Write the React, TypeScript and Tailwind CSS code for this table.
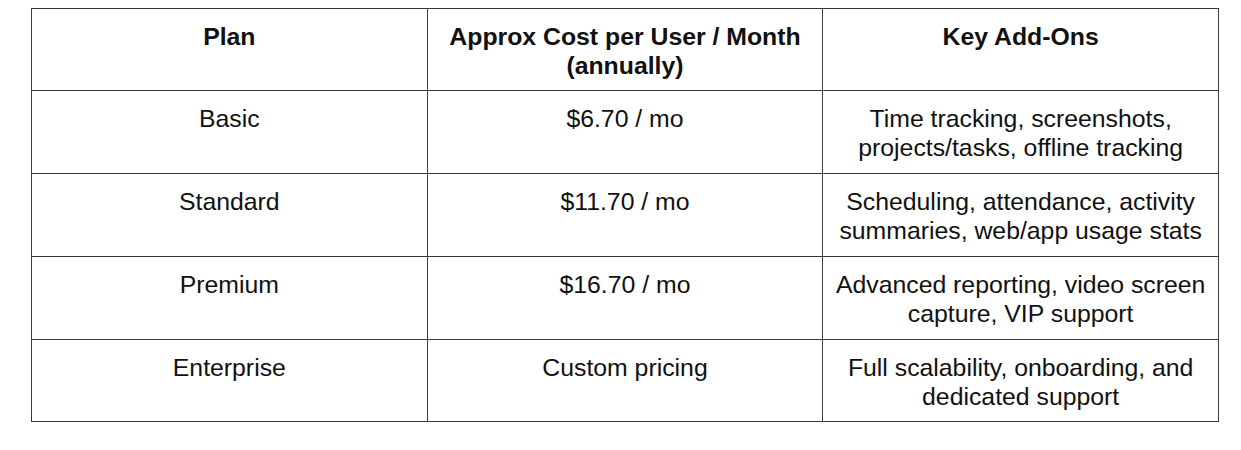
const rows = [
  {
    plan: "Basic",
    cost: "$6.70 / mo",
    addons: ["Time tracking, screenshots,", "projects/tasks, offline tracking"],
  },
  {
    plan: "Standard",
    cost: "$11.70 / mo",
    addons: ["Scheduling, attendance, activity", "summaries, web/app usage stats"],
  },
  {
    plan: "Premium",
    cost: "$16.70 / mo",
    addons: ["Advanced reporting, video screen", "capture, VIP support"],
  },
  {
    plan: "Enterprise",
    cost: "Custom pricing",
    addons: ["Full scalability, onboarding, and", "dedicated support"],
  },
];

const cell =
  "border border-[#3a3a3a] px-2 pt-[13px] align-top text-center";

export default function App() {
  return (
    <div className="min-h-[450px] bg-white pl-[31px] pt-[8px] font-['Liberation_Sans',Arial,sans-serif] text-[24.8px] leading-[29px] text-[#111]">
      <table className="w-[1188px] table-fixed border-collapse">
        <thead>
          <tr>
            <th className={`${cell} h-[82px] font-bold`}>Plan</th>
            <th className={`${cell} h-[82px] font-bold`}>
              Approx Cost per User / Month
              <br />
              (annually)
            </th>
            <th className={`${cell} h-[82px] font-bold`}>Key Add-Ons</th>
          </tr>
        </thead>
        <tbody>
          {rows.map((r, i) => {
            const h = i === rows.length - 1 ? "h-[82px]" : "h-[83px]";
            return (
              <tr key={r.plan}>
                <td className={`${cell} ${h}`}>{r.plan}</td>
                <td className={`${cell} ${h}`}>{r.cost}</td>
                <td className={`${cell} ${h}`}>
                  {r.addons[0]}
                  <br />
                  {r.addons[1]}
                </td>
              </tr>
            );
          })}
        </tbody>
      </table>
    </div>
  );
}
